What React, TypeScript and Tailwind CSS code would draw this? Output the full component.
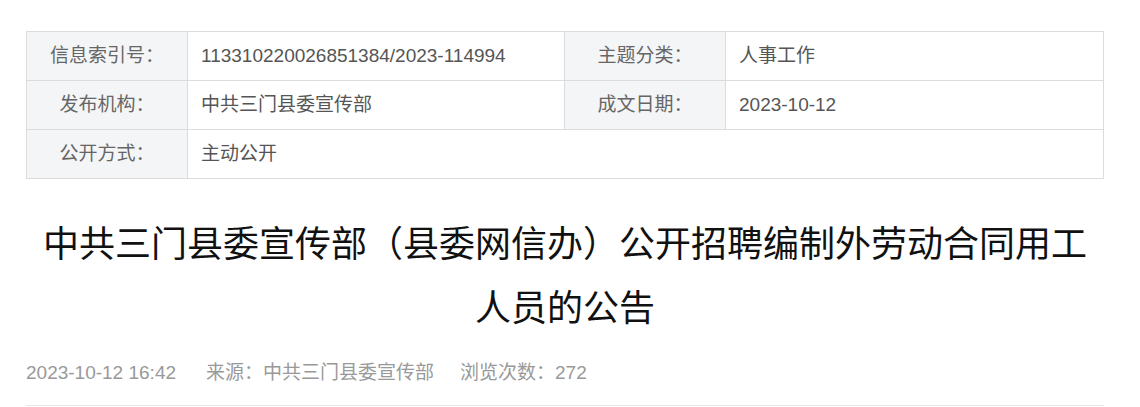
import React from "react";

const FONT = '"Liberation Sans", Arial, "Noto Sans CJK SC", sans-serif';

function Label({ children }: { children: React.ReactNode }) {
  return (
    <div className="flex h-[49px] items-center justify-center border-r border-b border-[#dcdcdc] bg-[#f4f5f7] text-[19px] text-[#666]">
      {children}
    </div>
  );
}

function Value({ children, span }: { children: React.ReactNode; span?: boolean }) {
  return (
    <div
      className={
        "flex h-[49px] items-center border-r border-b border-[#dcdcdc] bg-white pl-[13px] text-[19px] text-[#555] " +
        (span ? "col-span-3" : "")
      }
    >
      {children}
    </div>
  );
}

export default function App() {
  return (
    <div className="min-h-[407px] w-[1140px] bg-white" style={{ fontFamily: FONT }}>
      <div className="ml-[26px] w-[1078px] pt-[31px]">
        <div className="grid grid-cols-[161px_377px_161px_378px] border-l border-t border-[#dcdcdc]">
          <Label>信息索引号：</Label>
          <Value>113310220026851384/2023-114994</Value>
          <Label>主题分类：</Label>
          <Value>人事工作</Value>
          <Label>发布机构：</Label>
          <Value>中共三门县委宣传部</Value>
          <Label>成文日期：</Label>
          <Value>2023-10-12</Value>
          <Label>公开方式：</Label>
          <Value span>主动公开</Value>
        </div>

        <h1 className="mt-[34px] px-[14px] text-center text-[36px] font-normal leading-[64px] text-[#111]">
          中共三门县委宣传部（县委网信办）公开招聘编制外劳动合同用工人员的公告
        </h1>

        <div className="mt-[18px] flex items-center border-b border-[#e6e6e6] pb-[18px] text-[19px] leading-[28px] text-[#999]">
          <span className="mr-[30px]">2023-10-12 16:42</span>
          <span className="mr-[26px]">来源：中共三门县委宣传部</span>
          <span>浏览次数：272</span>
        </div>
      </div>
    </div>
  );
}
